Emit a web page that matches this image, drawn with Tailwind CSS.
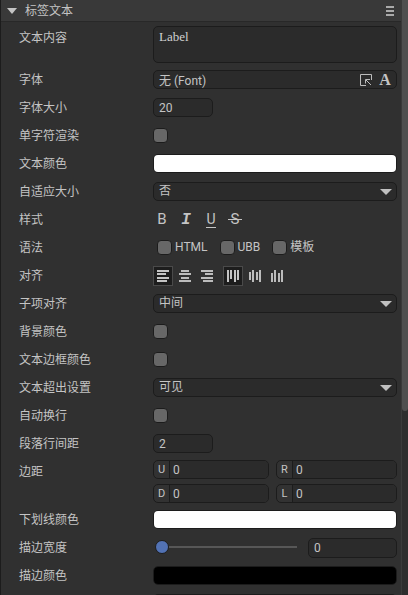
<!DOCTYPE html>
<html lang="zh-CN">
<head>
<meta charset="utf-8">
<meta name="viewport" content="width=device-width, initial-scale=1">
<title>标签文本</title>
<script src="https://cdn.jsdelivr.net/npm/@tailwindcss/browser@4"></script>
</head>
<body class="flex h-screen overflow-hidden bg-[#303030] font-[Roboto,'Noto_Sans_CJK_SC',sans-serif] text-xs text-[#c4c4c4]">
<main class="min-w-0 flex-1 overflow-hidden border-x border-l-[#1c1c1c] border-r-[#3a3a3a]">
  <header class="flex h-[22px] items-center justify-between border-b border-[#282828] bg-[#393939] pr-[7px] pl-1.5">
    <h1 class="flex items-center gap-2">
      <svg class="h-1.5 w-2.5" viewBox="0 0 10 6" fill="#c4c4c4"><path d="M0 0h10L5 6z"/></svg>标签文本
    </h1>
    <button type="button" aria-label="菜单"><svg class="h-2.5 w-2" viewBox="0 0 8 10" fill="#aaa"><path d="M0 0h8v2H0zM0 4h8v2H0zM0 8h8v2H0z"/></svg></button>
  </header>

  <form class="[&>div]:grid [&>div]:h-7 [&>div]:grid-cols-[134px_minmax(0,1fr)] [&>div]:items-start [&>div]:pt-1 [&>div]:pr-1 [&>div]:pl-[18px] [&>div>:first-child]:leading-[21px]">
    <div class="h-11!">
      <label for="content" class="pt-0.5">文本内容</label>
      <textarea id="content" class="block h-[37px] w-full resize-none rounded-[5px] border border-[#1c1c1c] bg-[#2b2b2b] px-[5px] py-0.5 font-['Liberation_Serif',serif] text-[13px] leading-4 text-[#d0d0d0]">Label</textarea>
    </div>
    <div>
      <label for="font">字体</label>
      <span class="flex h-[19px] items-center gap-1.5 rounded-[5px] border border-[#1c1c1c] bg-[#2b2b2b] pr-1 pl-[5px]">
        <input id="font" value="无 (Font)" readonly class="h-[17px] min-w-0 flex-1 bg-transparent">
        <button type="button" aria-label="选择"><svg class="size-3" viewBox="0 0 12 12" fill="none" stroke="#bcbcbc"><path d="M6 11.5H.5V.5h11V6"/><path d="M5.5 9.5V5.500h4.500M6 6l5 5"/></svg></button>
        <button type="button" class="w-3.5 font-['Liberation_Serif',serif] text-base leading-[17px] font-bold text-[#c4c4c4]">A</button>
      </span>
    </div>
    <div>
      <label for="size">字体大小</label>
      <input id="size" value="20" class="h-[19px] w-[60px] rounded-[5px] border border-[#1c1c1c] bg-[#2b2b2b] px-[5px]">
    </div>
    <div>
      <label for="single">单字符渲染</label>
      <input id="single" type="checkbox" class="mt-0.5 size-[15px] appearance-none rounded border border-[#1c1c1c] bg-[#676767]">
    </div>
    <div>
      <label for="color">文本颜色</label>
      <input id="color" type="color" value="#ffffff" class="h-[19px] w-full appearance-none overflow-hidden rounded-[5px] border border-[#1c1c1c] p-0 [&::-webkit-color-swatch]:border-0 [&::-webkit-color-swatch-wrapper]:p-0">
    </div>
    <div>
      <label for="auto">自适应大小</label>
      <span class="relative">
        <select id="auto" class="block h-[19px] w-full appearance-none rounded-[5px] border border-[#1c1c1c] bg-[#2b2b2b] px-[5px] leading-[17px]"><option>否</option></select>
        <svg class="pointer-events-none absolute top-[7px] right-[5px] h-1.5 w-3" viewBox="0 0 12 6" fill="#c0c0c0"><path d="M0 0h12L6 6z"/></svg>
      </span>
    </div>
    <div>
      <span>样式</span>
      <span class="flex gap-1 text-[15px] leading-[19px]">
        <button type="button" aria-label="粗体" class="h-[19px] w-5 pr-0.5">B</button>
        <button type="button" aria-label="斜体" class="h-[19px] w-5 pr-0.5 font-['Liberation_Mono',monospace] text-base leading-[21px] font-bold italic">I</button>
        <button type="button" aria-label="下划线" class="h-[19px] w-5 text-sm leading-[17px]"><span class="border-b border-[#c4c4c4]">U</span></button>
        <button type="button" aria-label="删除线" class="relative h-[19px] w-5 after:absolute after:top-[9px] after:left-[3px] after:h-px after:w-3.5 after:bg-[#c4c4c4]">S</button>
      </span>
    </div>
    <div>
      <span>语法</span>
      <span class="flex gap-3 pt-0.5 pl-1 leading-[15px]">
        <label class="flex gap-[3px]"><input type="checkbox" class="size-[15px] appearance-none rounded border border-[#1c1c1c] bg-[#676767]">HTML</label>
        <label class="flex gap-[3px]"><input type="checkbox" class="size-[15px] appearance-none rounded border border-[#1c1c1c] bg-[#676767]">UBB</label>
        <label class="flex gap-[3px]"><input type="checkbox" class="size-[15px] appearance-none rounded border border-[#1c1c1c] bg-[#676767]">模板</label>
      </span>
    </div>
    <div>
      <span>对齐</span>
      <span class="flex gap-1.5">
        <span class="flex gap-0.5">
          <button type="button" aria-label="左对齐" class="grid size-5 place-items-center border border-[#4a4a4a] bg-[#1d1d1d]"><svg class="size-3" viewBox="0 0 12 12" fill="#c4c4c4"><path d="M0 0h12v2H0zM0 3h9v2H0zM0 7h12v2H0zM0 10h10v2H0z"/></svg></button>
          <button type="button" aria-label="居中" class="grid size-5 place-items-center"><svg class="size-3" viewBox="0 0 12 12" fill="#bcbcbc"><path d="M2 0h8v2H2zM0 3h12v2H0zM2 7h8v2H2zM0 10h12v2H0z"/></svg></button>
          <button type="button" aria-label="右对齐" class="grid size-5 place-items-center"><svg class="size-3" viewBox="0 0 12 12" fill="#bcbcbc"><path d="M0 0h12v2H0zM4 3h8v2H4zM0 7h12v2H0zM2 10h10v2H2z"/></svg></button>
        </span>
        <span class="flex gap-0.5">
          <button type="button" aria-label="顶部对齐" class="grid size-5 place-items-center border border-[#4a4a4a] bg-[#1d1d1d]"><svg class="size-3" viewBox="0 0 12 12" fill="#c4c4c4"><path d="M0 0h2v12H0zM3 0h2v9H3zM7 0h2v12H7zM10 0h2v10h-2z"/></svg></button>
          <button type="button" aria-label="垂直居中" class="grid size-5 place-items-center"><svg class="size-3" viewBox="0 0 12 12" fill="#bcbcbc"><path d="M0 2h2v8H0zM3 0h2v12H3zM7 2h2v8H7zM10 0h2v12h-2z"/></svg></button>
          <button type="button" aria-label="底部对齐" class="grid size-5 place-items-center"><svg class="size-3" viewBox="0 0 12 12" fill="#bcbcbc"><path d="M0 3h2v9H0zM3 0h2v12H3zM7 3h2v9H7zM10 0h2v12h-2z"/></svg></button>
        </span>
      </span>
    </div>
    <div>
      <label for="item">子项对齐</label>
      <span class="relative">
        <select id="item" class="block h-[19px] w-full appearance-none rounded-[5px] border border-[#1c1c1c] bg-[#2b2b2b] px-[5px] leading-[17px]"><option>中间</option></select>
        <svg class="pointer-events-none absolute top-[7px] right-[5px] h-1.5 w-3" viewBox="0 0 12 6" fill="#c0c0c0"><path d="M0 0h12L6 6z"/></svg>
      </span>
    </div>
    <div>
      <label for="bg">背景颜色</label>
      <input id="bg" type="checkbox" class="mt-0.5 size-[15px] appearance-none rounded border border-[#1c1c1c] bg-[#676767]">
    </div>
    <div>
      <label for="border">文本边框颜色</label>
      <input id="border" type="checkbox" class="mt-0.5 size-[15px] appearance-none rounded border border-[#1c1c1c] bg-[#676767]">
    </div>
    <div>
      <label for="overflow">文本超出设置</label>
      <span class="relative">
        <select id="overflow" class="block h-[19px] w-full appearance-none rounded-[5px] border border-[#1c1c1c] bg-[#2b2b2b] px-[5px] leading-[17px]"><option>可见</option></select>
        <svg class="pointer-events-none absolute top-[7px] right-[5px] h-1.5 w-3" viewBox="0 0 12 6" fill="#c0c0c0"><path d="M0 0h12L6 6z"/></svg>
      </span>
    </div>
    <div>
      <label for="wrap">自动换行</label>
      <input id="wrap" type="checkbox" class="mt-0.5 size-[15px] appearance-none rounded border border-[#1c1c1c] bg-[#676767]">
    </div>
    <div>
      <label for="leading">段落行间距</label>
      <input id="leading" value="2" class="h-[19px] w-[60px] rounded-[5px] border border-[#1c1c1c] bg-[#2b2b2b] px-[5px]">
    </div>
    <div class="h-12! pt-0.5!">
      <span class="pt-0.5">边距</span>
      <span class="grid grid-cols-[116fr_121fr] gap-x-[7px] gap-y-[5px]">
        <label class="flex h-[19px] overflow-hidden rounded-[5px] border border-[#1c1c1c] bg-[#323232] text-[11px] leading-[17px]"><span class="w-4 shrink-0 border-r border-[#1c1c1c] text-center">U</span><input value="0" class="w-full min-w-0 bg-[#2b2b2b] pl-[3px] text-xs"></label>
        <label class="flex h-[19px] overflow-hidden rounded-[5px] border border-[#1c1c1c] bg-[#323232] text-[11px] leading-[17px]"><span class="w-4 shrink-0 border-r border-[#1c1c1c] text-center">R</span><input value="0" class="w-full min-w-0 bg-[#2b2b2b] pl-[3px] text-xs"></label>
        <label class="flex h-[19px] overflow-hidden rounded-[5px] border border-[#1c1c1c] bg-[#323232] text-[11px] leading-[17px]"><span class="w-4 shrink-0 border-r border-[#1c1c1c] text-center">D</span><input value="0" class="w-full min-w-0 bg-[#2b2b2b] pl-[3px] text-xs"></label>
        <label class="flex h-[19px] overflow-hidden rounded-[5px] border border-[#1c1c1c] bg-[#323232] text-[11px] leading-[17px]"><span class="w-4 shrink-0 border-r border-[#1c1c1c] text-center">L</span><input value="0" class="w-full min-w-0 bg-[#2b2b2b] pl-[3px] text-xs"></label>
      </span>
    </div>
    <div>
      <label for="underline">下划线颜色</label>
      <input id="underline" type="color" value="#ffffff" class="h-[19px] w-full appearance-none overflow-hidden rounded-[5px] border border-[#1c1c1c] p-0 [&::-webkit-color-swatch]:border-0 [&::-webkit-color-swatch-wrapper]:p-0">
    </div>
    <div>
      <label for="stroke">描边宽度</label>
      <span class="flex gap-[11px] pl-0.5">
        <input id="stroke" type="range" value="0" class="h-[17px] min-w-0 flex-1 appearance-none bg-transparent [&::-webkit-slider-runnable-track]:h-0.5 [&::-webkit-slider-runnable-track]:bg-[#575757] [&::-webkit-slider-thumb]:-mt-1.5 [&::-webkit-slider-thumb]:size-3.5 [&::-webkit-slider-thumb]:appearance-none [&::-webkit-slider-thumb]:rounded-full [&::-webkit-slider-thumb]:border [&::-webkit-slider-thumb]:border-[#1c1c1c] [&::-webkit-slider-thumb]:bg-[#5272b4]">
        <input aria-label="描边宽度" value="0" class="h-5 w-[89px] rounded-[5px] border border-[#1c1c1c] bg-[#2b2b2b] px-[5px]">
      </span>
    </div>
    <div>
      <label for="strokecolor">描边颜色</label>
      <input id="strokecolor" type="color" value="#000000" class="h-[19px] w-full appearance-none overflow-hidden rounded-[5px] border border-[#1c1c1c] p-0 [&::-webkit-color-swatch]:border-0 [&::-webkit-color-swatch-wrapper]:p-0">
    </div>
    <div>
      <span></span>
      <input type="text" aria-label="阴影" class="h-[19px] w-full rounded-[5px] border border-[#1c1c1c] bg-[#2b2b2b]">
    </div>
  </form>
</main>
<div class="w-1.5 shrink-0 bg-[#2d2d2d]"><div class="h-[69%] rounded-b-full bg-[#4f4f4f]"></div></div>
</body>
</html>
